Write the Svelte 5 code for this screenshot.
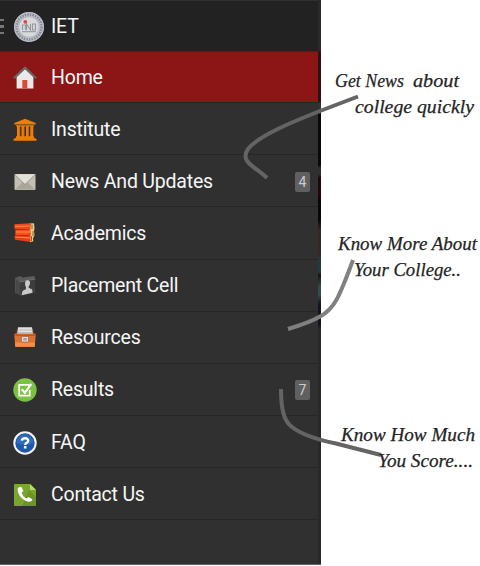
<script>
  const items = [
    { icon: 'home', label: 'Home', active: true },
    { icon: 'institute', label: 'Institute' },
    { icon: 'mail', label: 'News And Updates', count: 4 },
    { icon: 'books', label: 'Academics' },
    { icon: 'folder', label: 'Placement Cell' },
    { icon: 'drawer', label: 'Resources' },
    { icon: 'check', label: 'Results', count: 7 },
    { icon: 'faq', label: 'FAQ' },
    { icon: 'phone', label: 'Contact Us' }
  ];
  const notes = [
    { text: 'Get News', x: 335, y: 87, w: 69 },
    { text: 'about', x: 413, y: 87, w: 46 },
    { text: 'college quickly', x: 355, y: 113, w: 119 },
    { text: 'Know More About', x: 338, y: 250, w: 139 },
    { text: 'Your College..', x: 354, y: 276, w: 107 },
    { text: 'Know How Much', x: 341, y: 441, w: 134 },
    { text: 'You Score....', x: 378, y: 467, w: 95 }
  ];
</script>

<div class="page">
  <div class="screen">
    <nav>
      <header>
        <span class="burger"><i></i><i></i><i></i></span>
        <svg class="seal" viewBox="0 0 32 32">
          <circle cx="16" cy="16" r="15" fill="#c3c5cc" />
          <circle cx="16" cy="16" r="12.6" fill="none" stroke="#858a98" stroke-width="2.6" stroke-dasharray="1.6 1" />
          <circle cx="16" cy="16" r="14.5" fill="none" stroke="#b4b9c6" />
          <circle cx="16" cy="16" r="10.3" fill="#d9d9dc" stroke="#a4a7b0" stroke-width=".7" />
          <path d="M9.5 19v-5h3v5m1 0v-6l4 6v-6m2 0h3v6h-3z" fill="none" stroke="#96989e" stroke-width="1.1" />
          <path d="M9 20.7h14" stroke="#8f929a" stroke-width="1" />
          <circle cx="12.3" cy="10.8" r="1.9" fill="#ec3e48" />
        </svg>
        <span class="label">IET</span>
      </header>
      {#each items as item}
        <div class="row" class:active={item.active}>
          <svg class="icon" viewBox="0 0 24 24">
            {#if item.icon === 'home'}
              <path d="M3.6 11 12 3l8.4 8v11.5H3.6z" fill="#e9e9e9" />
              <path d="M.8 12.2 12 1.7l11.2 10.5" fill="none" stroke="#666869" stroke-width="2" />
              <path d="M9.3 14h5v8.5h-5z" fill="#dc4b31" />
            {:else if item.icon === 'institute'}
              <path d="M12 .7 22.7 5v1.6H1.3V5zM3 7.3h18v1.3H3zM4 8.5h3v9.8H4zM8.5 8.5h2.8v9.8H8.5zM13 8.5h2.8v9.8H13zM17.3 8.5h3v9.8h-3zM3 18.3h18v1.4l2.5 1.4v1.7H.5v-1.7L3 19.7z" fill="#f07c05" />
              <path d="M6.9 9v9M11.2 9v9M15.7 9v9" stroke="#b65a04" stroke-width=".6" />
            {:else if item.icon === 'mail'}
              <rect x="1.5" y="4" width="21" height="16" rx="1" fill="#c2bfb2" />
              <path d="m2 19.5 7.8-7.5h4.400l7.800 7.500z" fill="#aaa698" />
              <path d="M1.7 4.3h20.600L12 14.500z" fill="#e3e1d6" />
              <path d="m1.7 4.5 10.300 10 10.300-10" fill="none" stroke="#8c897d" stroke-width=".8" />
            {:else if item.icon === 'books'}
              <path d="M3 4h14v14H3z" fill="#8c1e0b" />
              <path d="m16.500 1.500 4.500-.3.500 5-.5 3 .5 4-1.500 3 .3 3-3.300 1z" fill="#e6cf8d" />
              <path d="M19 2.500v5M20 9v5M18.500 14v5" stroke="#855021" stroke-width=".9" />
              <path d="m1.300 2.300 15.700-1 1 1-.7 5.200L1.600 7.300z" fill="#ed481b" />
              <path d="m2.300 8 15-.2.700 5.100-15.700.300z" fill="#f0521d" />
              <path d="m1.300 13.800 16.200-.2V20L2 17.700z" fill="#e63f13" />
              <path d="m2 4.500 15-.5M3 10h14M2.500 15l14 .8" stroke="#ff8a42" stroke-width="1.200" />
            {:else if item.icon === 'folder'}
              <path d="m2 4 5.500-2 2 1.500 11-1.500 1.500 1V18.500L8 21.500l-6-3z" fill="#5a5a5a" />
              <path d="M6.500 8 22.500 5l-1 13.500-14 3z" fill="#3c3c3c" />
              <path d="M2.500 4.500v13.500l4.500 3V8z" fill="#484848" />
              <path d="m6.700 8 15.500-3" stroke="#777" stroke-width=".8" />
              <path d="M12.200 8c.5-2.400 4.500-2.500 4.800.3.200 2-.5 3-1.300 4v1.500l3.500 1.600.3 3.300-10.800 2.500.8-4.200 3.500-2v-1.800c-.9-1.500-1.200-2.600-.8-5.200z" fill="#c9c9c9" />
            {:else if item.icon === 'drawer'}
              <path d="M4 3h16l2 8H2z" fill="#773629" />
              <path d="M5 1.200h14l1 8H4z" fill="#dfe0e2" />
              <path d="M4.500 4h15M4 6.500h16" stroke="#aaaeb4" stroke-width=".7" />
              <path d="M2 7.500h20l.7 2-1 11.300H2.300l-1-11.300z" fill="#dd7132" />
              <path d="M1.300 9.200h21.400" stroke="#b25a2e" stroke-width="1.500" />
              <path d="M2 16.500h20l-.3 4.300H2.300z" fill="#f09148" />
              <rect x="8.500" y="10.500" width="7" height="5.500" rx=".5" fill="#e6dcd3" stroke="#8c5740" stroke-width=".6" />
              <rect x="10.200" y="12" width="3.600" height="2.500" fill="#9fa2a5" />
            {:else if item.icon === 'check'}
              <circle cx="12" cy="12" r="11.700" fill="#7bc143" />
              <path d="M16.500 6.800H6.200v10.800h10.500v-5.500" fill="none" stroke="#fff" stroke-width="1.700" />
              <path d="m8.800 11.300 3 3.500 6.500-9" fill="none" stroke="#fff" stroke-width="2.200" />
            {:else if item.icon === 'faq'}
              <circle cx="12" cy="12" r="10.700" fill="#1e58a9" stroke="#f5f5f5" stroke-width="2" />
              <path d="M3.500 12a8.500 8.500 0 0 1 17 0q-8 4-17 0" fill="#3d78c5" opacity=".65" />
              <path d="M8.900 9.600c.2-3 6.300-3.200 6.300.1 0 2.200-3 2-3 4.200" fill="none" stroke="#fff" stroke-width="2.400" />
              <path d="M10.900 15.100h2.600v2.400h-2.600z" fill="#fff" />
            {:else}
              <path d="M2 1h15l6 6v15q0 1-1 1H2q-1 0-1-1V2q0-1 1-1z" fill="#79a72e" />
              <path d="m17 1 6 6h-6z" fill="#b5dc62" />
              <path d="m16 7 7 7v9H9z" fill="#64891f" opacity=".6" />
              <path d="M6 4.300 8.500 4l1.800 4-1.700 1.800c.8 2.500 2.600 4.600 5 5.700l2-1.500 3.700 2.200c.2 1.300-1.200 2.600-2.700 2.600C11 18.700 5 12.500 4.600 7.200c0-1.500.4-2.300 1.400-2.900z" fill="#fff" />
            {/if}
          </svg>
          <span class="label">{item.label}</span>
          {#if item.count}<span class="badge">{item.count}</span>{/if}
        </div>
      {/each}
    </nav>
    <div class="edge"></div>
  </div>
  <svg class="notes" viewBox="0 0 480 566">
    <g fill="none" stroke-width="4">
      <path d="M358 96.500 320 111C292 122 258 136 248 149C239 162 256 167 267 178" stroke="#646464" />
      <path d="M353 260C339 298 334 309 320 316.500Q311 322 288 329" stroke="#808080" />
      <path d="M281 389C281 410 284 421 292 427C302 435 319 440 336 443.500L381 455" stroke="#646464" />
    </g>
    {#each notes as note}
      <text x={note.x} y={note.y} textLength={note.w} lengthAdjust="spacingAndGlyphs">{note.text}</text>
    {/each}
  </svg>
</div>

<style>
  .page {
    position: relative;
    width: 480px;
    height: 566px;
    background: #fff;
    overflow: hidden;
    font-family: Roboto, sans-serif;
  }
  .screen {
    display: flex;
    width: 321px;
    height: 565px;
    box-sizing: border-box;
    border-bottom: 1px solid #626262;
    background: #303030;
  }
  nav { width: 318px; }
  header {
    display: flex;
    align-items: center;
    height: 51px;
    box-sizing: border-box;
    border-top: 1px solid #303030;
    padding-top: 1px;
    background: #222;
  }
  .burger {
    display: flex;
    flex-direction: column;
    gap: 4px;
    width: 4px;
    margin-right: 9px;
  }
  .burger i { height: 2.5px; background: #777; }
  .seal { width: 32px; height: 32px; margin-right: 6px; }
  .label {
    color: #f6f6f6;
    font-size: 19.5px;
    line-height: 24px;
    letter-spacing: -.2px;
    white-space: pre;
  }
  .row {
    display: flex;
    align-items: center;
    height: 52.15px;
    box-sizing: border-box;
    border-bottom: 1px solid #262626;
    padding: 2px 8px 0 13px;
  }
  .row.active { background: #8c1616; border-top: 1px solid #681616; padding-top: 1px; }
  .icon { width: 24px; height: 24px; margin-right: 14px; }
  .badge {
    width: 15px;
    height: 20px;
    margin-left: auto;
    border-radius: 2px;
    background: #606060;
    color: #ccc;
    font-size: 14px;
    line-height: 21px;
    text-align: center;
  }
  .edge {
    width: 3px;
    background: linear-gradient(#292929 0 51px, #301010 52px 102px, #333 103px 110px, #090909 115px 165px, #303030 168px 174px, #240508 178px 196px, #080808 200px 220px, #352824 230px 254px, #243b3e 260px 272px, #1a1010 275px, #384b4c 287px 295px, #11151d 304px 325px, #292929 328px);
  }
  .notes { position: absolute; inset: 0; width: 480px; height: 566px; }
  .notes text {
    fill: #242424;
    font-family: "Liberation Serif", serif;
    font-size: 19px;
    font-style: italic;
    stroke: #242424;
    stroke-width: .25px;
  }
</style>
